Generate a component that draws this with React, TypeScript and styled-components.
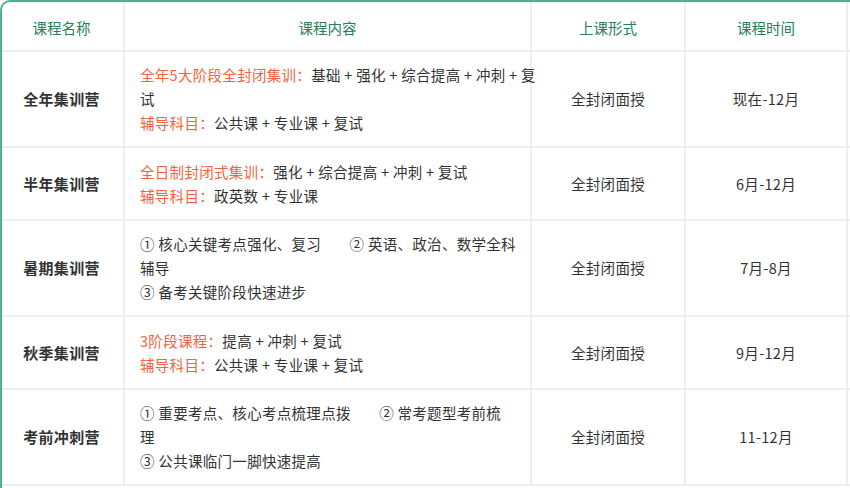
import React from "react";
import styled, { createGlobalStyle } from "styled-components";

const G = createGlobalStyle`
  html, body { margin: 0; padding: 0; background: #fff; }
  body { font-family: "Microsoft YaHei", "Noto Sans CJK SC", sans-serif; overflow: hidden; }
`;

const Frame = styled.div`
  width: 850px;
  height: 488px;
  border-top: 2px solid #4db388;
  border-left: 2px solid #4db388;
  border-top-left-radius: 10px;
  overflow: hidden;
  box-sizing: border-box;
`;

const Table = styled.table`
  border-collapse: collapse;
  table-layout: fixed;
  width: 1000px;
  margin-top: -2px;
  margin-left: -2px;
`;

const Th = styled.th`
  height: 51px;
  border: 2px solid #eeeeee;
  border-top: none;
  color: #2a7e5a;
  font-weight: normal;
  font-size: 14.5px;
  padding: 4px 0 0;
  box-sizing: border-box;
  &:first-child { border-left: none; }
`;

const Td = styled.td<{ $bold?: boolean; $h: number; $left?: boolean }>`
  height: ${(p) => p.$h}px;
  border: 2px solid #eeeeee;
  font-size: ${(p) => (p.$bold ? "15px" : "14.5px")};
  letter-spacing: 0.3px;
  color: #333;
  line-height: 24px;
  white-space: nowrap;
  text-align: ${(p) => (p.$left ? "left" : "center")};
  font-weight: ${(p) => (p.$bold ? "bold" : "normal")};
  padding: ${(p) => (p.$left ? "0 10px 0 15px" : "0")};
  box-sizing: border-box;
  &:first-child { border-left: none; }
`;

const Red = styled.span`
  color: #f5623d;
`;

type Row = { name: string; h: number; content: React.ReactNode; form: string; time: string };

const rows: Row[] = [
  {
    name: "全年集训营",
    h: 96,
    content: (
      <>
        <Red>全年5大阶段全封闭集训：</Red>基础 + 强化 + 综合提高 + 冲刺 + 复
        <br />试
        <br />
        <Red>辅导科目：</Red>公共课 + 专业课 + 复试
      </>
    ),
    form: "全封闭面授",
    time: "现在-12月",
  },
  {
    name: "半年集训营",
    h: 73,
    content: (
      <>
        <Red>全日制封闭式集训：</Red>强化 + 综合提高 + 冲刺 + 复试
        <br />
        <Red>辅导科目：</Red>政英数 + 专业课
      </>
    ),
    form: "全封闭面授",
    time: "6月-12月",
  },
  {
    name: "暑期集训营",
    h: 96,
    content: (
      <>
        ① 核心关键考点强化、复习&nbsp;&nbsp;&nbsp;&nbsp;&nbsp;&nbsp;&nbsp;&nbsp;② 英语、政治、数学全科
        <br />辅导
        <br />③ 备考关键阶段快速进步
      </>
    ),
    form: "全封闭面授",
    time: "7月-8月",
  },
  {
    name: "秋季集训营",
    h: 73,
    content: (
      <>
        <Red>3阶段课程：</Red>提高 + 冲刺 + 复试
        <br />
        <Red>辅导科目：</Red>公共课 + 专业课 + 复试
      </>
    ),
    form: "全封闭面授",
    time: "9月-12月",
  },
  {
    name: "考前冲刺营",
    h: 96,
    content: (
      <>
        ① 重要考点、核心考点梳理点拨&nbsp;&nbsp;&nbsp;&nbsp;&nbsp;&nbsp;&nbsp;&nbsp;② 常考题型考前梳
        <br />理
        <br />③ 公共课临门一脚快速提高
      </>
    ),
    form: "全封闭面授",
    time: "11-12月",
  },
];

export default function App() {
  return (
    <Frame>
      <G />
      <Table>
        <colgroup>
          <col style={{ width: 124 }} />
          <col style={{ width: 407 }} />
          <col style={{ width: 154 }} />
          <col style={{ width: 162 }} />
          <col style={{ width: 153 }} />
        </colgroup>
        <thead>
          <tr>
            <Th>课程名称</Th>
            <Th>课程内容</Th>
            <Th>上课形式</Th>
            <Th>课程时间</Th>
            <Th></Th>
          </tr>
        </thead>
        <tbody>
          {rows.map((r) => (
            <tr key={r.name}>
              <Td $h={r.h} $bold>{r.name}</Td>
              <Td $h={r.h} $left>{r.content}</Td>
              <Td $h={r.h}>{r.form}</Td>
              <Td $h={r.h}>{r.time}</Td>
              <Td $h={r.h}></Td>
            </tr>
          ))}
        </tbody>
      </Table>
    </Frame>
  );
}
